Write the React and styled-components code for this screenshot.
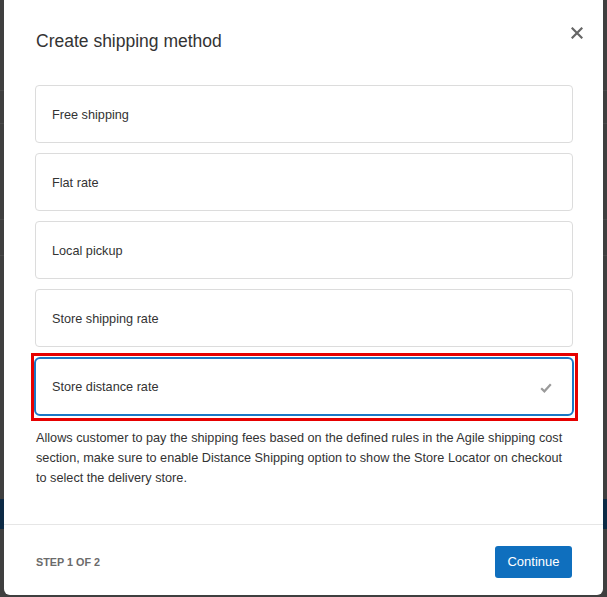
import React, { useState } from 'react';
import styled, { createGlobalStyle } from 'styled-components';

const GlobalStyle = createGlobalStyle`
  html, body {
    margin: 0;
    padding: 0;
  }
  body {
    background-color: #3f3f3f;
    background-image:
      linear-gradient(#4a4a4a, #4a4a4a),
      linear-gradient(#4a4a4a, #4a4a4a),
      linear-gradient(#4a4a4a, #4a4a4a),
      linear-gradient(#4a4a4a, #4a4a4a),
      linear-gradient(#0d2a45, #0d2a45);
    background-repeat: no-repeat;
    background-size: 100% 1px, 100% 1px, 100% 1px, 100% 1px, 100% 30px;
    background-position: 0 90px, 0 123px, 0 219px, 0 255px, 0 499px;
    font-family: "Liberation Sans", Arial, sans-serif;
  }
`;

const Page = styled.div`
  width: 607px;
  height: 597px;
  padding: 0 4px 2px;
  box-sizing: border-box;
  overflow: hidden;
`;

const Modal = styled.div`
  height: 595px;
  background: #fff;
  border-radius: 0 0 6px 6px;
  display: flex;
  flex-direction: column;
  color: #333;
`;

const Header = styled.div`
  display: flex;
  justify-content: space-between;
  align-items: flex-start;
  padding: 30px 20px 0 32px;
  height: 56px;
  box-sizing: border-box;
`;

const Title = styled.h1`
  margin: 0;
  font-size: 17.5px;
  line-height: 22px;
  font-weight: 400;
  color: #333;
`;

const Close = styled.button`
  border: none;
  background: none;
  padding: 0;
  margin-top: -3px;
  cursor: pointer;
  display: flex;
`;

const Body = styled.div`
  flex: 1;
  padding: 29px 30px 0 31px;
`;

const Options = styled.div`
  display: flex;
  flex-direction: column;
  gap: 10px;
`;

const Option = styled.div`
  position: relative;
  height: ${({ $active }) => ($active ? '59px' : '58px')};
  margin: 0 ${({ $active }) => ($active ? '-1px' : '0')};
  box-sizing: border-box;
  border: ${({ $active }) => ($active ? '2px solid #1a78c6' : '1px solid #dcdcdc')};
  border-radius: ${({ $active }) => ($active ? '6px' : '4px')};
  display: flex;
  align-items: center;
  justify-content: space-between;
  padding: 1px 20px 0 16px;
  font-size: 12.7px;
  color: #333;
  cursor: pointer;

  ${({ $active }) =>
    $active &&
    `
    &::after {
      content: '';
      position: absolute;
      top: -6px;
      left: -5px;
      right: -6px;
      bottom: -7px;
      border: 3px solid #e60000;
      pointer-events: none;
    }
  `}
`;

const CheckWrap = styled.span`
  display: flex;
  margin-top: 2px;
`;

const Description = styled.p`
  margin: 12px 0 0 1px;
  padding-right: 6px;
  font-size: 12.7px;
  line-height: 20px;
  color: #333;
`;

const Footer = styled.div`
  border-top: 1px solid #e6e6e6;
  height: 71px;
  box-sizing: border-box;
  display: flex;
  align-items: center;
  justify-content: space-between;
  padding: 3px 31px 0 32px;
`;

const Step = styled.span`
  font-size: 10.8px;
  font-weight: 700;
  color: #6b6b6b;
`;

const Button = styled.button`
  height: 32px;
  width: 77px;
  padding: 0;
  border: none;
  border-radius: 3px;
  background: #0f6fbe;
  color: #fff;
  font-family: inherit;
  font-size: 13px;
  cursor: pointer;
`;

const CloseIcon = () => (
  <svg width="12" height="12" viewBox="0 0 12 12">
    <path d="M1.5 1.5 L10.5 10.5 M10.5 1.5 L1.5 10.5" stroke="#666" strokeWidth="2.2" strokeLinecap="square" />
  </svg>
);

const CheckIcon = () => (
  <svg width="12" height="10" viewBox="0 0 12 10">
    <path d="M1.2 5.2 L4.4 8.3 L10.8 1.3" stroke="#9a9a9a" strokeWidth="2.2" fill="none" />
  </svg>
);

const methods = [
  'Free shipping',
  'Flat rate',
  'Local pickup',
  'Store shipping rate',
  'Store distance rate',
];

const App = () => {
  const [selected, setSelected] = useState(4);

  return (
    <Page>
      <GlobalStyle />
      <Modal>
        <Header>
          <Title>Create shipping method</Title>
          <Close aria-label="Close">
            <CloseIcon />
          </Close>
        </Header>
        <Body>
          <Options>
            {methods.map((m, i) => (
              <Option key={m} $active={i === selected} onClick={() => setSelected(i)}>
                <span>{m}</span>
                {i === selected && (
                  <CheckWrap>
                    <CheckIcon />
                  </CheckWrap>
                )}
              </Option>
            ))}
          </Options>
          <Description>
            Allows customer to pay the shipping fees based on the defined rules in the Agile shipping cost
            section, make sure to enable Distance Shipping option to show the Store Locator on checkout
            to select the delivery store.
          </Description>
        </Body>
        <Footer>
          <Step>STEP 1 OF 2</Step>
          <Button>Continue</Button>
        </Footer>
      </Modal>
    </Page>
  );
};

export default App;
